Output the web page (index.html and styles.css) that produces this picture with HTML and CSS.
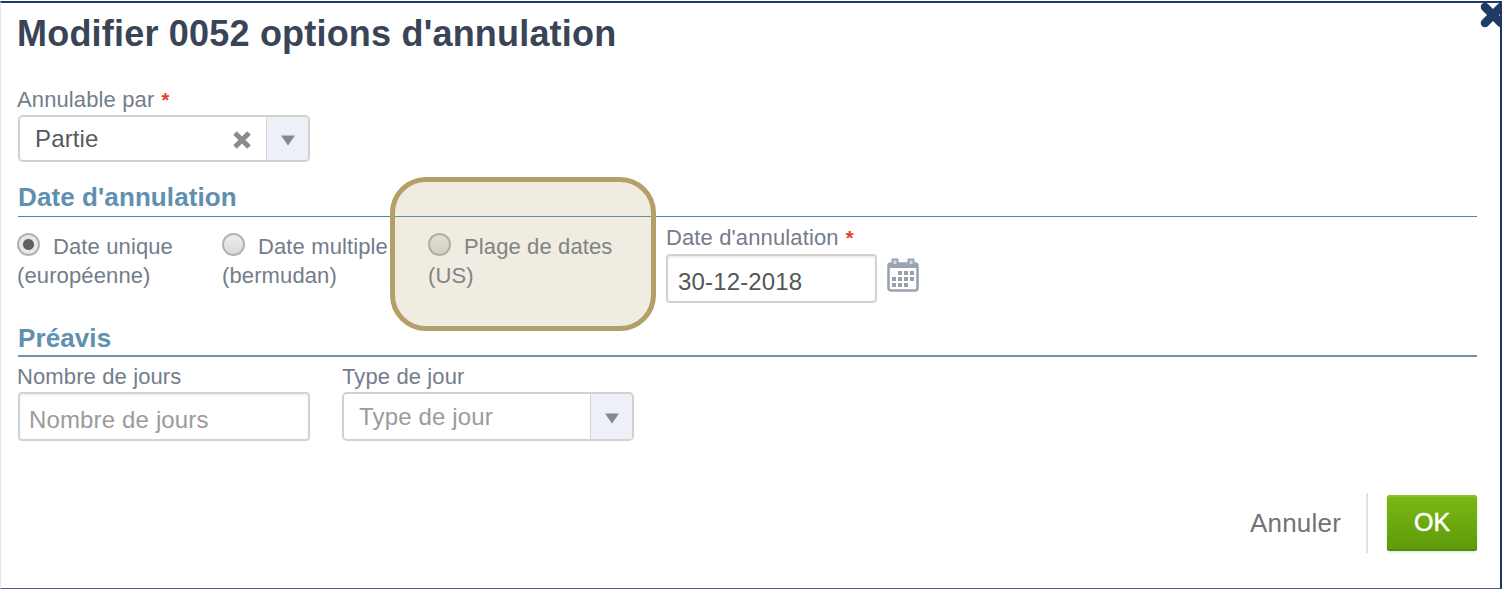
FILE: index.html
```html
<!DOCTYPE html>
<html lang="fr">
<head>
<meta charset="utf-8">
<title>Modifier 0052 options d'annulation</title>
<link rel="stylesheet" href="styles.css">
</head>
<body>
<main class="dialog">
  <svg class="close" width="24" height="28" viewBox="0 0 24 28"><path d="M6 4 22 20M22 4 6 20" stroke="#1f3a63" stroke-width="8.500" stroke-linecap="round"/></svg>
  <h1 class="title">Modifier 0052 options d'annulation</h1>

  <div class="field">
    <div class="label">Annulable par <span class="required">*</span></div>
    <div class="select">
      <span class="select-value">Partie</span>
      <svg class="clear" width="20" height="20" viewBox="0 0 20 20"><path d="M3 3l14 14M17 3l-14 14" stroke="#8b8b8b" stroke-width="5"/></svg>
      <span class="arrow"><svg width="14" height="11" viewBox="0 0 14 11"><path d="M0 .5h14L7 10.500z" fill="#888"/></svg></span>
    </div>
  </div>

  <h2 class="section section-date">Date d'annulation</h2>
  <div class="date-row">
    <div class="option"><span class="radio checked"></span>Date unique<br>(européenne)</div>
    <div class="option"><span class="radio"></span>Date multiple<br>(bermudan)</div>
    <div class="option range"><span class="radio"></span>Plage de dates<br>(US)</div>
    <div class="date-field">
      <div class="label">Date d'annulation <span class="required">*</span></div>
      <div class="date-line">
        <div class="input date-input">30-12-2018</div>
        <svg class="calendar" width="32" height="34" viewBox="0 0 32 34">
          <rect x="1.500" y="5.500" width="29" height="27" rx="2.500" fill="#fff" stroke="#9ba3af" stroke-width="2.600"/>
          <path d="M1 5h30v5H1z" fill="#9ba3af"/>
          <path d="M5.500 6V1.500h5V6M21.500 6V1.500h5V6" fill="#d5d8dd" stroke="#9ba3af" stroke-width="2"/>
          <path d="M11 13h4v4h-4zM17 13h4v4h-4zM23 13h4v4h-4zM5 19h4v4H5zM11 19h4v4h-4zM17 19h4v4h-4zM23 19h4v4h-4zM5 25h4v4H5zM11 25h4v4h-4zM17 25h4v4h-4z" fill="#979fac"/>
        </svg>
      </div>
    </div>
    <div class="highlight"></div>
  </div>

  <h2 class="section section-notice">Préavis</h2>
  <div class="notice-row">
    <div class="notice-field">
      <div class="label">Nombre de jours</div>
      <div class="input placeholder">Nombre de jours</div>
    </div>
    <div class="notice-field">
      <div class="label">Type de jour</div>
      <div class="select placeholder">
        <span class="select-value">Type de jour</span>
        <span class="arrow"><svg width="14" height="11" viewBox="0 0 14 11"><path d="M0 .5h14L7 10.500z" fill="#888"/></svg></span>
      </div>
    </div>
  </div>

  <footer class="actions">
    <span class="cancel">Annuler</span>
    <span class="divider"></span>
    <span class="ok">OK</span>
  </footer>
</main>
</body>
</html>
```
FILE: styles.css
```css
* { box-sizing: border-box; }
body {
  margin: 0;
  padding-top: 1px;
  height: 589px;
  overflow: hidden;
  background: #fff;
  font-family: "Liberation Sans", Arial, sans-serif;
  font-size: 22px;
  color: #737d8a;
}
.dialog {
  position: relative;
  height: 588px;
  padding: 0 23px 0 17px;
  border: solid;
  border-width: 2px 2px 1px 1px;
  border-color: #1f3a66 #1c3768 #4d5f85 #e6e8f1;
}
.close { position: absolute; top: 0; right: -3px; }
.title {
  margin: 0 0 0 -1px;
  height: 84px;
  padding-top: 10px;
  font-size: 36px;
  line-height: 42px;
  letter-spacing: 0.2px;
  color: #394456;
}
.label { margin-left: -1px; height: 28px; line-height: 26px; letter-spacing: 0.12px; white-space: nowrap; }
.required { margin-left: 1px; font-size: 20px; font-weight: bold; line-height: 20px; color: #e8392b; }
.field .select { height: 47px; }
.select {
  display: flex;
  align-items: center;
  width: 292px;
  height: 48px;
  border: 2px solid #d2d2d2;
  border-radius: 5px;
  background: #fff;
  font-size: 24px;
  letter-spacing: 0.15px;
  color: #595959;
}
.select-value { flex: 1; padding: 1px 0 0 15px; }
.clear { margin: 3px 14px 0 0; }
.arrow {
  display: flex;
  align-items: center;
  justify-content: center;
  align-self: stretch;
  width: 42px;
  padding-top: 3px;
  border-left: 1px solid #d4d4d4;
  border-radius: 0 3px 3px 0;
  background: #edf0f6;
}
.input {
  width: 292px;
  height: 49px;
  padding: 6px 0 0 9px;
  border: 2px solid #d2d2d2;
  border-radius: 4px;
  box-shadow: inset 0 2px 2px #f1f1f1;
  font-size: 24px;
  line-height: 40px;
  letter-spacing: 0.15px;
  color: #555;
}
.placeholder { color: #9b9b9b; }
.notice-field .select { height: 49px; margin-left: -1px; }
.section {
  margin: 0;
  font-size: 26px;
  line-height: 30px;
  letter-spacing: 0.1px;
  color: #6090af;
  border-bottom: 2px solid #6795b2;
}
.section-date { margin-top: 20px; height: 35px; border-bottom: 1px solid #4f87ab; }
.section-notice { height: 34px; }
.date-row {
  position: relative;
  display: grid;
  grid-template-columns: 205px 206px 238px 1fr;
  height: 106px;
}
.option { margin-left: -1px; padding-top: 15px; line-height: 29px; letter-spacing: 0.12px; white-space: nowrap; }
.radio {
  display: inline-block;
  width: 23px;
  height: 23px;
  margin-right: 13px;
  vertical-align: -2px;
  border: 2px solid #b2b2b2;
  border-radius: 50%;
  background: linear-gradient(#eee, #dadada);
}
.checked { background: radial-gradient(circle, #606060 0 5px, #e8e8e8 6px); }
.date-field { padding-top: 8px; }
.date-line { display: flex; gap: 10px; margin: 1px 0 0 -1px; }
.date-input { width: 211px; height: 49px; padding-left: 10px; }
.calendar { margin-top: 4px; }
.highlight {
  position: absolute;
  left: 372px;
  top: -40px;
  width: 266px;
  height: 154px;
  border: 5px solid #b3a069;
  border-radius: 36px;
  background: rgba(179, 160, 105, 0.2);
}
.notice-row { display: flex; gap: 33px; padding-top: 7px; }
.actions { display: flex; align-items: center; justify-content: flex-end; margin-top: 51px; height: 62px; }
.cancel { font-size: 26px; letter-spacing: 0.2px; color: #737373; }
.divider { width: 2px; height: 60px; margin: 0 19px 0 25px; background: #e1e1e1; }
.ok {
  width: 90px;
  height: 56px;
  border-radius: 3px;
  background: linear-gradient(#7cb913, #5c9a0b);
  box-shadow: inset 0 2px 0 #8bc52d, inset 0 -2px 0 #518c09, 0 1px 3px #ddd;
  font-size: 25px;
  -webkit-text-stroke: 0.5px #fff;
  line-height: 55px;
  text-align: center;
  color: #fff;
}
```
